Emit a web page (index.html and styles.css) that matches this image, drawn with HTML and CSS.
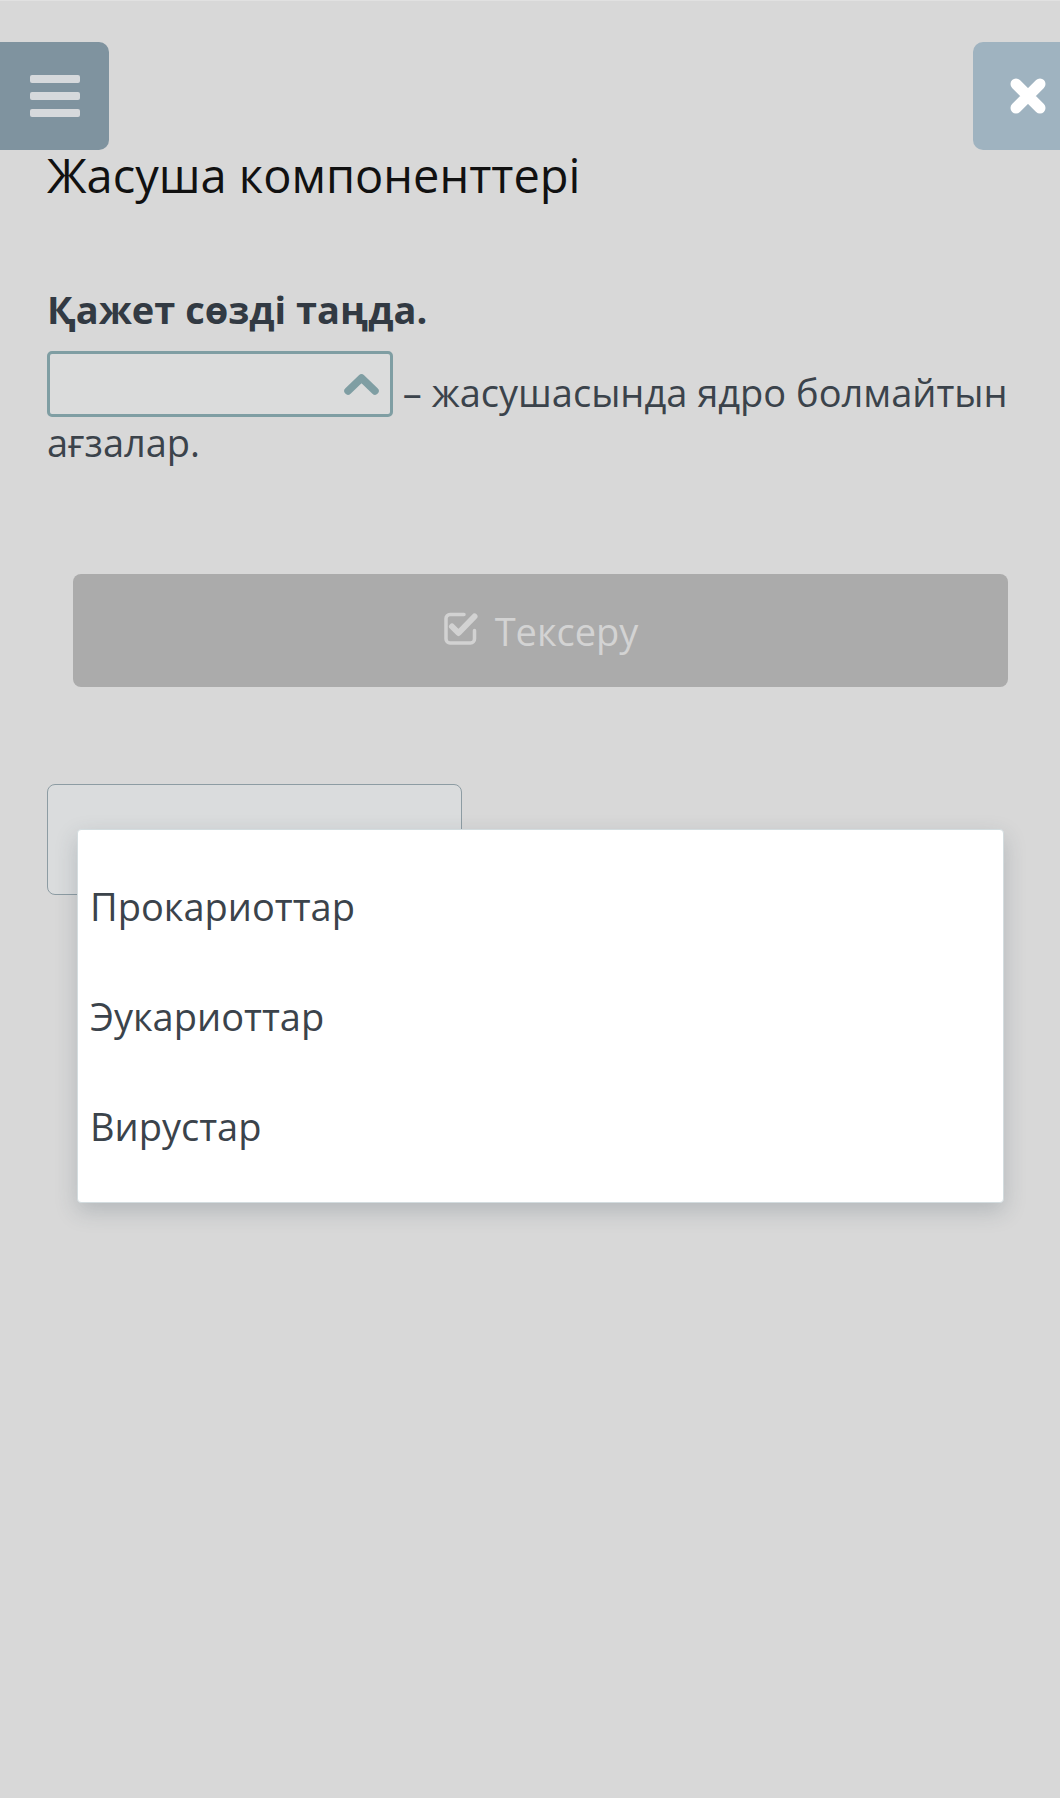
FILE: index.html
```
<!DOCTYPE html>
<html lang="kk">
<head>
  <meta charset="UTF-8" />
  <meta name="viewport" content="width=device-width, initial-scale=1" />
  <title>Жасуша компоненттері</title>
  <link rel="stylesheet" href="styles.css">
</head>
<body>

  <!-- Menu button -->
  <div class="side-btn menu-btn" role="button" aria-label="Menu">
    <span></span>
    <span></span>
    <span></span>
  </div>

  <!-- Close button -->
  <div class="side-btn close-btn" role="button" aria-label="Close">
    <svg width="38" height="38" viewBox="0 0 38 38" aria-hidden="true">
      <path d="M7 7 L31 31 M31 7 L7 31" stroke="#fff" stroke-width="11" stroke-linecap="round" fill="none"/>
    </svg>
  </div>

  <main class="task">
    <h1 class="task-title">Жасуша компоненттері</h1>

    <p class="task-hint">Қажет сөзді таңда.</p>

    <p class="task-text">
      <span class="select-box" aria-expanded="true">
        <svg class="select-arrow" width="35" height="22" viewBox="0 0 35 22" aria-hidden="true">
          <polyline points="4,18 17.5,5 31,18" stroke="#7f9ea3" stroke-width="7.5" stroke-linecap="round" stroke-linejoin="round" fill="none"/>
        </svg>
      </span> – жасушасында ядро болмайтын ағзалар.
    </p>

    <button class="check-btn" disabled>
      <svg width="36" height="35" viewBox="0 0 36 35" aria-hidden="true">
        <path d="M21 3.5 H7 A4 4 0 0 0 3 7.5 V28 A4 4 0 0 0 7 32 H27.5 A4 4 0 0 0 31.5 28 V19.5" stroke="#d2d2d2" stroke-width="3.5" fill="none" stroke-linecap="round"/>
        <polyline points="9,15.5 15.5,22 31.5,5.5" stroke="#d2d2d2" stroke-width="6" stroke-linecap="round" stroke-linejoin="round" fill="none"/>
      </svg>
      <span>Тексеру</span>
    </button>

    <div class="result-area">
      <div class="result-box"></div>

      <!-- Open dropdown -->
      <ul class="dropdown" role="listbox">
        <li role="option">Прокариоттар</li>
        <li role="option">Эукариоттар</li>
        <li role="option">Вирустар</li>
      </ul>
    </div>
  </main>

</body>
</html>
```

FILE: styles.css
```
/* Reset */
* {
  margin: 0;
  padding: 0;
  box-sizing: border-box;
}

:root {
  --page-bg: #d8d8d8;
  --text-main: #3b434b;
  --text-dark: #111;
  --accent: #7f9ea3;
}

html, body {
  min-height: 100%;
}

body {
  background: var(--page-bg);
  border-top: 1px solid #e1e1e1;
  font-family: 'Open Sans', 'Noto Sans', sans-serif;
  color: var(--text-main);
  min-height: 100vh;
}

/* Side buttons */
.side-btn {
  position: fixed;
  top: 42px;
  height: 108px;
  display: flex;
  cursor: pointer;
  z-index: 10;
}

.menu-btn {
  left: 0;
  width: 109px;
  background: #7f939f;
  border-radius: 0 10px 10px 0;
  flex-direction: column;
  justify-content: center;
  align-items: center;
  gap: 9px;
}

.menu-btn span {
  display: block;
  width: 50px;
  height: 8px;
  border-radius: 2px;
  background: #d6d9dc;
}

.close-btn {
  right: 0;
  width: 87px;
  background: #9fb3c0;
  border-radius: 10px 0 0 10px;
  align-items: center;
  padding-left: 36px;
}

/* Task */
.task {
  padding: 142px 30px 0 47px;
}

.task-title {
  font-size: 47px;
  font-weight: 400;
  line-height: 64px;
  color: var(--text-dark);
}

.task-hint {
  margin-top: 77px;
  font-size: 38px;
  font-weight: 700;
  line-height: 50px;
  color: #323a43;
}

.task-text {
  margin-top: 17px;
  font-size: 38px;
  line-height: 50px;
  color: var(--text-main);
}

.select-box {
  display: inline-flex;
  justify-content: flex-end;
  align-items: center;
  vertical-align: bottom;
  width: 346px;
  height: 66px;
  padding-right: 11px;
  border: 3px solid var(--accent);
  border-radius: 5px;
  background: #dbdcdc;
}

.check-btn {
  display: flex;
  align-items: center;
  justify-content: center;
  gap: 16px;
  width: 935px;
  height: 113px;
  margin: 107px 0 0 26px;
  border: none;
  border-radius: 8px;
  background: #ababab;
  color: #d3d3d3;
  font-family: inherit;
  font-size: 38px;
  line-height: 50px;
}

.check-btn svg {
  margin-top: -4px;
}

/* Result area with dropdown over it */
.result-area {
  position: relative;
  margin-top: 97px;
}

.result-box {
  width: 415px;
  height: 111px;
  border: 1.5px solid #8d9ca3;
  border-radius: 8px;
  background: #dadcdd;
}

.dropdown {
  position: absolute;
  top: 45px;
  left: 30px;
  width: 927px;
  padding: 21px 0;
  list-style: none;
  background: #fff;
  border: 1px solid #d3dcdf;
  border-radius: 4px;
  box-shadow: 0 8px 22px rgba(50, 70, 80, 0.22);
  z-index: 5;
}

.dropdown li {
  padding: 30px 12px;
  font-size: 38px;
  line-height: 50px;
  color: var(--text-main);
}
```
